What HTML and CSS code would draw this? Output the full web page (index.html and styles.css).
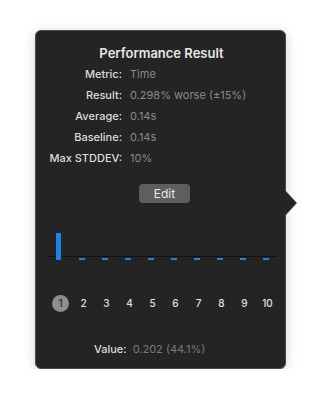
FILE: index.html
```html
<!DOCTYPE html>
<html>
<head>
<meta charset="utf-8">
<link rel="stylesheet" href="styles.css">
</head>
<body>
<div class="popover">
  <div class="arrow"></div>
  <div class="title">Performance Result</div>
  <div class="info">
    <div class="label">Metric:</div><div class="value">Time</div>
    <div class="label">Result:</div><div class="value">0.298% worse (±15%)</div>
    <div class="label">Average:</div><div class="value">0.14s</div>
    <div class="label">Baseline:</div><div class="value">0.14s</div>
    <div class="label">Max STDDEV:</div><div class="value">10%</div>
  </div>
  <div class="edit-row"><div class="edit">Edit</div></div>
  <div class="chart">
    <div class="axis"></div>
    <div class="slot"><div class="bar"></div></div>
    <div class="slot"><div class="dash"></div></div>
    <div class="slot"><div class="dash"></div></div>
    <div class="slot"><div class="dash"></div></div>
    <div class="slot"><div class="dash"></div></div>
    <div class="slot"><div class="dash"></div></div>
    <div class="slot"><div class="dash"></div></div>
    <div class="slot"><div class="dash"></div></div>
    <div class="slot"><div class="dash"></div></div>
    <div class="slot"><div class="dash"></div></div>
  </div>
  <div class="numbers">
    <div class="num"><span class="sel">1</span></div>
    <div class="num">2</div>
    <div class="num">3</div>
    <div class="num">4</div>
    <div class="num">5</div>
    <div class="num">6</div>
    <div class="num">7</div>
    <div class="num">8</div>
    <div class="num">9</div>
    <div class="num">10</div>
  </div>
  <div class="valrow"><span class="vlabel">Value:</span><span class="vvalue">0.202 (44.1%)</span></div>
</div>
</body>
</html>
```
FILE: styles.css
```css
html, body {
  margin: 0;
  padding: 0;
  background: #ffffff;
}
body {
  padding: 30px 0 0 35px;
  font-family: "Inter", "Liberation Sans", sans-serif;
}
.popover {
  position: relative;
  box-sizing: border-box;
  width: 251px;
  height: 339px;
  background: #242424;
  border: 1px solid #4c4c4c;
  border-radius: 6px;
  box-shadow: 0 2px 12px rgba(0,0,0,0.18);
}
.arrow {
  position: absolute;
  right: -11px;
  top: 160px;
  width: 0;
  height: 0;
  border-top: 12px solid transparent;
  border-bottom: 12px solid transparent;
  border-left: 11px solid #242424;
  filter: drop-shadow(1px 0 0 #4c4c4c);
}
.title {
  text-align: center;
  color: #e6e6e6;
  font-size: 13px;
  font-weight: 600;
  padding-top: 13px;
  height: 18px;
  line-height: 18px;
  padding-left: 2px;
}
.info {
  display: grid;
  grid-template-columns: 86px auto;
  column-gap: 8px;
  grid-auto-rows: 21px;
  margin-top: 2px;
  font-size: 11px;
  line-height: 21px;
}
.label {
  text-align: right;
  color: #dcdcdc;
  font-weight: 500;
}
.value {
  color: #8a8a8a;
}
.edit-row {
  display: flex;
  justify-content: center;
  margin-top: 15px;
  padding-left: 8px;
}
.edit {
  width: 51px;
  height: 19px;
  line-height: 19px;
  text-align: center;
  background: #5e5e5e;
  border-radius: 4px;
  color: #e8e8e8;
  font-size: 12px;
}
.chart {
  position: relative;
  display: flex;
  align-items: flex-end;
  margin: 28px 0 0 11px;
  height: 29px;
  width: 230px;
}
.axis {
  position: absolute;
  left: 0;
  right: 0;
  bottom: 3px;
  height: 1px;
  background: #121212;
}
.slot {
  width: 23px;
  display: flex;
  justify-content: center;
  align-items: flex-end;
}
.bar {
  width: 5px;
  height: 27px;
  background: #1b84ec;
  position: relative;
}
.dash {
  width: 6px;
  height: 2px;
  background: #1b84ec;
  position: relative;
}
.numbers {
  display: flex;
  margin: 34px 0 0 13px;
  height: 18px;
  align-items: center;
}
.num {
  width: 23px;
  text-align: center;
  color: #e0e0e0;
  font-size: 10px;
  font-weight: 500;
  display: flex;
  justify-content: center;
}
.sel {
  width: 17px;
  height: 17px;
  line-height: 17px;
  border-radius: 50%;
  background: #8e8e8e;
  color: #2a2a2a;
  text-align: center;
}
.valrow {
  margin-top: 30px;
  padding-left: 58px;
  font-size: 11px;
  line-height: 14px;
}
.vlabel {
  color: #dcdcdc;
  font-weight: 500;
  margin-right: 6px;
}
.vvalue {
  color: #7a7a7a;
}
```
